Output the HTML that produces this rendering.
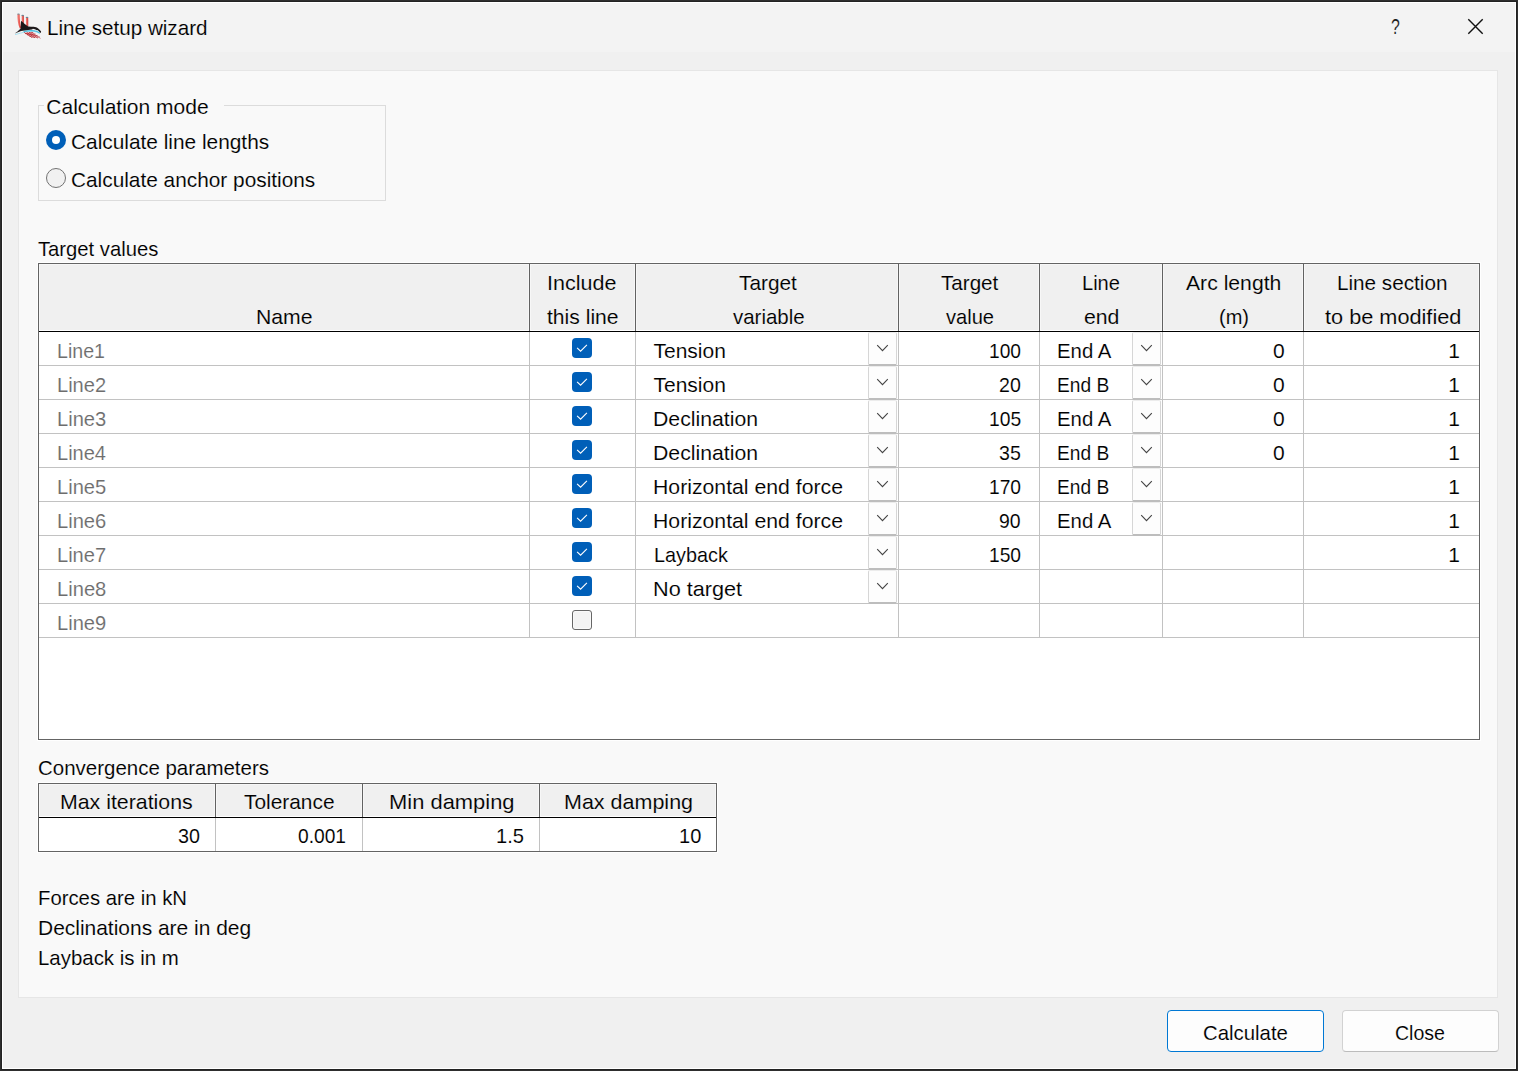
<!DOCTYPE html>
<html lang="en"><head><meta charset="utf-8"><title>Line setup wizard</title>
<style>
html,body{margin:0;padding:0}
body{width:1518px;height:1071px;overflow:hidden;background:#f0f0f0;position:relative;font-family:"Liberation Sans",sans-serif;font-size:21px;color:#000}
.abs{position:absolute}
.t{position:absolute;line-height:24px;height:24px;white-space:nowrap;transform-origin:0 0}
.frame{position:absolute;left:0;top:0;width:1516px;height:1069px;border:1px solid #2e2e2e;box-shadow:inset 0 0 0 1px #222,inset 0 0 0 2px #fff;pointer-events:none}
.titlebar{position:absolute;left:2px;top:2px;width:1514px;height:50px;background:#f3f3f3}
.panel{position:absolute;left:18px;top:70px;width:1478px;height:926px;background:#f9f9f9;border:1px solid #e6e6e6}
.group{position:absolute;left:38px;top:105px;width:346px;height:94px;border:1px solid #dcdcdc}
.legendgap{position:absolute;left:44px;top:104px;width:180px;height:3px;background:#f9f9f9}
.radio{position:absolute;width:20px;height:20px;border-radius:50%;box-sizing:border-box}
.radio.on{background:#005fb8}
.radio.on::after{content:"";position:absolute;left:5.9px;top:5.9px;width:8.2px;height:8.2px;border-radius:50%;background:#fff}
.radio.off{background:#f1f1f1;border:1px solid #727272}
.grid{position:absolute;left:38px;top:263px;width:1440px;height:475px;border:1px solid #646464;background:#fff;box-shadow:0 0 0 1px #fff}
.ghead{position:absolute;left:39px;top:264px;width:1440px;height:67px;background:#f0f0f0}
.hl{position:absolute;height:1px;background:#c2c2c2}
.vl{position:absolute;width:1px;background:#c2c2c2}
.vh{position:absolute;width:1px;background:#626262}
.hc{position:absolute;background:#f0f0f0;box-sizing:border-box;border:1px solid #f7f7f7;border-bottom-color:#fff}
.hk{position:absolute;height:1px;background:#000}
.cb{position:absolute;width:20px;height:20px;border-radius:4px;box-sizing:border-box}
.cb.on{background:#005fb8}
.cb.off{background:#f3f3f3;border:1px solid #666;box-shadow:inset 0 0 0 1px #f9f9f9;border-radius:3px}
.cb svg{position:absolute;left:0;top:0}
.dd{position:absolute;width:29px;height:34px;box-sizing:border-box;background:#fdfdfd;border:1px solid #d6d6d6;border-top-color:#ececec;border-bottom:2px solid #bdbdbd;border-radius:2px}
.dd svg{position:absolute;left:0;top:0}
.grid2{position:absolute;left:38px;top:783px;width:677px;height:67px;border:1px solid #646464;background:#fff;box-shadow:0 0 0 1px #fff}
.g2head{position:absolute;left:39px;top:784px;width:677px;height:33px;background:#f0f0f0}
.btn{position:absolute;box-sizing:border-box;height:42px;border-radius:4px;background:#fdfdfd}
.gray{color:#6d6d6d}
.bt{-webkit-text-stroke:0.12px #f3f3f3}.bp{-webkit-text-stroke:0.12px #f9f9f9}.bh{-webkit-text-stroke:0.12px #f0f0f0}.bb{-webkit-text-stroke:0.12px #fdfdfd}.bw{-webkit-text-stroke:0.12px #fff}
</style></head><body>
<div class="titlebar"></div>
<svg class="abs" style="left:13px;top:11px" width="32" height="30" viewBox="0 0 32 30">
<defs><linearGradient id="rg" x1="0" x2="1" y1="0" y2="0"><stop offset="0" stop-color="#f29088"/><stop offset="0.45" stop-color="#ee5e56"/><stop offset="1" stop-color="#c03a3a"/></linearGradient></defs>
<path d="M4.3 3.2 L6.7 3.2 C6.7 8 7 13 8.5 17.6 L6.8 17.6 C4.8 13 4.3 8 4.3 3.2 Z" fill="url(#rg)"/>
<path d="M8.6 4.6 L10.9 4.6 L10.9 13.5 L8.7 13.5 Z" fill="url(#rg)"/>
<path d="M12.9 6.5 L15.2 6.5 L15.3 15.6 L13.1 15.6 Z" fill="url(#rg)"/>
<g fill="#6f8390"><ellipse cx="5.45" cy="3.1" rx="1.35" ry="0.7"/><ellipse cx="9.7" cy="4.5" rx="1.3" ry="0.7"/><ellipse cx="14" cy="6.4" rx="1.3" ry="0.7"/></g>
<path d="M2 23.6 C6 23 9.5 21.2 13 20.6 C18 19.8 23.5 20.2 26.8 22.6" fill="none" stroke="#a8e2f2" stroke-width="1"/>
<path d="M10.5 20.6 C15 19.6 21 19.4 24 20.4 C25.4 20.9 26.2 21.6 26.9 22.2" fill="none" stroke="#4cc0e0" stroke-width="1.1"/>
<g stroke="#b8242c" stroke-width="0.9" fill="none">
<path d="M11.2 21.4 L19 26.4" opacity="0.95"/><path d="M13.6 21.3 L22 26.8" opacity="0.9"/><path d="M16 21.2 L25 27.2" opacity="0.8"/><path d="M18.4 21.2 L27.5 27.4" opacity="0.6"/>
<path d="M12.2 22.6 L20.2 21.6" opacity="0.95"/><path d="M14.2 23.9 L22.4 23" opacity="0.9"/><path d="M16.3 25.2 L24.6 24.4" opacity="0.8"/><path d="M18.4 26.4 L26.8 25.8" opacity="0.6"/>
</g>
<path d="M1.7 22.6 C3.4 21.4 5.6 19.6 7.6 17.8 C7.8 15.2 8 12.6 8 10.4 L8.5 10 C10.6 12 12.8 14 15.2 15.5 C17.2 15.6 19 15.7 20.5 15.8 C22.4 16 24 16.6 25.2 17.4 C26.4 18.2 27.4 19.3 28.1 20.6 C28.1 21.2 27.9 21.7 27.6 21.9 C26.9 21.3 26 20.3 24.7 18.9 C24.4 19.2 24.1 19.3 23.9 19.2 C22.6 18.6 21.2 18 19.9 17.8 C19.6 18.2 19.2 18.4 18.8 18.5 C15 18.9 11.5 19.4 8.1 20 C6 20.8 3.8 21.8 1.7 22.6 Z" fill="#1c1819"/>
</svg>
<div class="t bt" id="qm" style="left:1391px;top:15px;font-size:22px;transform:scaleX(0.72);color:#1a1a1a">?</div>
<svg class="abs" style="left:1466px;top:17px" width="20" height="20" viewBox="0 0 20 20"><path d="M2.3 2.3 L16.7 16.7 M16.7 2.3 L2.3 16.7" stroke="#111" stroke-width="1.4" fill="none"/></svg>
<div class="panel"></div>
<div class="group"></div><div class="legendgap"></div>
<div class="radio on" style="left:46px;top:130px"></div>
<div class="radio off" style="left:46px;top:168px"></div>
<div class="grid"></div><div class="ghead"></div>
<div class="hc" style="left:39px;top:264px;width:490px;height:67px"></div>
<div class="hc" style="left:530px;top:264px;width:105px;height:67px"></div>
<div class="hc" style="left:636px;top:264px;width:262px;height:67px"></div>
<div class="hc" style="left:899px;top:264px;width:140px;height:67px"></div>
<div class="hc" style="left:1040px;top:264px;width:122px;height:67px"></div>
<div class="hc" style="left:1163px;top:264px;width:140px;height:67px"></div>
<div class="hc" style="left:1304px;top:264px;width:175px;height:67px"></div>
<div class="hk" style="left:39px;top:331px;width:1440px"></div>
<div class="hl" style="left:39px;top:365px;width:1440px"></div>
<div class="hl" style="left:39px;top:399px;width:1440px"></div>
<div class="hl" style="left:39px;top:433px;width:1440px"></div>
<div class="hl" style="left:39px;top:467px;width:1440px"></div>
<div class="hl" style="left:39px;top:501px;width:1440px"></div>
<div class="hl" style="left:39px;top:535px;width:1440px"></div>
<div class="hl" style="left:39px;top:569px;width:1440px"></div>
<div class="hl" style="left:39px;top:603px;width:1440px"></div>
<div class="hl" style="left:39px;top:637px;width:1440px"></div>
<div class="vh" style="left:529px;top:264px;height:67px"></div>
<div class="vl" style="left:529px;top:332px;height:306px"></div>
<div class="vh" style="left:635px;top:264px;height:67px"></div>
<div class="vl" style="left:635px;top:332px;height:306px"></div>
<div class="vh" style="left:898px;top:264px;height:67px"></div>
<div class="vl" style="left:898px;top:332px;height:306px"></div>
<div class="vh" style="left:1039px;top:264px;height:67px"></div>
<div class="vl" style="left:1039px;top:332px;height:306px"></div>
<div class="vh" style="left:1162px;top:264px;height:67px"></div>
<div class="vl" style="left:1162px;top:332px;height:306px"></div>
<div class="vh" style="left:1303px;top:264px;height:67px"></div>
<div class="vl" style="left:1303px;top:332px;height:306px"></div>
<div class="cb on" style="left:572px;top:338px"><svg width="20" height="20" viewBox="0 0 20 20"><path d="M5.1 9.9 L8.6 13.2 L14.9 6.9" stroke="#fff" stroke-width="1.1" fill="none"/></svg></div>
<div class="dd" style="left:868px;top:332px"><svg width="27" height="31" viewBox="0 0 27 31"><path d="M8.2 12.2 L13.5 17.6 L18.8 12.2" stroke="#444" stroke-width="1.1" fill="none"/></svg></div>
<div class="dd" style="left:1132px;top:332px"><svg width="27" height="31" viewBox="0 0 27 31"><path d="M8.2 12.2 L13.5 17.6 L18.8 12.2" stroke="#444" stroke-width="1.1" fill="none"/></svg></div>
<div class="cb on" style="left:572px;top:372px"><svg width="20" height="20" viewBox="0 0 20 20"><path d="M5.1 9.9 L8.6 13.2 L14.9 6.9" stroke="#fff" stroke-width="1.1" fill="none"/></svg></div>
<div class="dd" style="left:868px;top:366px"><svg width="27" height="31" viewBox="0 0 27 31"><path d="M8.2 12.2 L13.5 17.6 L18.8 12.2" stroke="#444" stroke-width="1.1" fill="none"/></svg></div>
<div class="dd" style="left:1132px;top:366px"><svg width="27" height="31" viewBox="0 0 27 31"><path d="M8.2 12.2 L13.5 17.6 L18.8 12.2" stroke="#444" stroke-width="1.1" fill="none"/></svg></div>
<div class="cb on" style="left:572px;top:406px"><svg width="20" height="20" viewBox="0 0 20 20"><path d="M5.1 9.9 L8.6 13.2 L14.9 6.9" stroke="#fff" stroke-width="1.1" fill="none"/></svg></div>
<div class="dd" style="left:868px;top:400px"><svg width="27" height="31" viewBox="0 0 27 31"><path d="M8.2 12.2 L13.5 17.6 L18.8 12.2" stroke="#444" stroke-width="1.1" fill="none"/></svg></div>
<div class="dd" style="left:1132px;top:400px"><svg width="27" height="31" viewBox="0 0 27 31"><path d="M8.2 12.2 L13.5 17.6 L18.8 12.2" stroke="#444" stroke-width="1.1" fill="none"/></svg></div>
<div class="cb on" style="left:572px;top:440px"><svg width="20" height="20" viewBox="0 0 20 20"><path d="M5.1 9.9 L8.6 13.2 L14.9 6.9" stroke="#fff" stroke-width="1.1" fill="none"/></svg></div>
<div class="dd" style="left:868px;top:434px"><svg width="27" height="31" viewBox="0 0 27 31"><path d="M8.2 12.2 L13.5 17.6 L18.8 12.2" stroke="#444" stroke-width="1.1" fill="none"/></svg></div>
<div class="dd" style="left:1132px;top:434px"><svg width="27" height="31" viewBox="0 0 27 31"><path d="M8.2 12.2 L13.5 17.6 L18.8 12.2" stroke="#444" stroke-width="1.1" fill="none"/></svg></div>
<div class="cb on" style="left:572px;top:474px"><svg width="20" height="20" viewBox="0 0 20 20"><path d="M5.1 9.9 L8.6 13.2 L14.9 6.9" stroke="#fff" stroke-width="1.1" fill="none"/></svg></div>
<div class="dd" style="left:868px;top:468px"><svg width="27" height="31" viewBox="0 0 27 31"><path d="M8.2 12.2 L13.5 17.6 L18.8 12.2" stroke="#444" stroke-width="1.1" fill="none"/></svg></div>
<div class="dd" style="left:1132px;top:468px"><svg width="27" height="31" viewBox="0 0 27 31"><path d="M8.2 12.2 L13.5 17.6 L18.8 12.2" stroke="#444" stroke-width="1.1" fill="none"/></svg></div>
<div class="cb on" style="left:572px;top:508px"><svg width="20" height="20" viewBox="0 0 20 20"><path d="M5.1 9.9 L8.6 13.2 L14.9 6.9" stroke="#fff" stroke-width="1.1" fill="none"/></svg></div>
<div class="dd" style="left:868px;top:502px"><svg width="27" height="31" viewBox="0 0 27 31"><path d="M8.2 12.2 L13.5 17.6 L18.8 12.2" stroke="#444" stroke-width="1.1" fill="none"/></svg></div>
<div class="dd" style="left:1132px;top:502px"><svg width="27" height="31" viewBox="0 0 27 31"><path d="M8.2 12.2 L13.5 17.6 L18.8 12.2" stroke="#444" stroke-width="1.1" fill="none"/></svg></div>
<div class="cb on" style="left:572px;top:542px"><svg width="20" height="20" viewBox="0 0 20 20"><path d="M5.1 9.9 L8.6 13.2 L14.9 6.9" stroke="#fff" stroke-width="1.1" fill="none"/></svg></div>
<div class="dd" style="left:868px;top:536px"><svg width="27" height="31" viewBox="0 0 27 31"><path d="M8.2 12.2 L13.5 17.6 L18.8 12.2" stroke="#444" stroke-width="1.1" fill="none"/></svg></div>
<div class="cb on" style="left:572px;top:576px"><svg width="20" height="20" viewBox="0 0 20 20"><path d="M5.1 9.9 L8.6 13.2 L14.9 6.9" stroke="#fff" stroke-width="1.1" fill="none"/></svg></div>
<div class="dd" style="left:868px;top:570px"><svg width="27" height="31" viewBox="0 0 27 31"><path d="M8.2 12.2 L13.5 17.6 L18.8 12.2" stroke="#444" stroke-width="1.1" fill="none"/></svg></div>
<div class="cb off" style="left:572px;top:610px"></div>
<div class="grid2"></div><div class="g2head"></div>
<div class="hc" style="left:39px;top:784px;width:176px;height:33px"></div>
<div class="hc" style="left:216px;top:784px;width:146px;height:33px"></div>
<div class="hc" style="left:363px;top:784px;width:176px;height:33px"></div>
<div class="hc" style="left:540px;top:784px;width:176px;height:33px"></div>
<div class="hk" style="left:39px;top:817px;width:677px"></div>
<div class="vh" style="left:215px;top:784px;height:33px"></div>
<div class="vl" style="left:215px;top:818px;height:33px"></div>
<div class="vh" style="left:362px;top:784px;height:33px"></div>
<div class="vl" style="left:362px;top:818px;height:33px"></div>
<div class="vh" style="left:539px;top:784px;height:33px"></div>
<div class="vl" style="left:539px;top:818px;height:33px"></div>
<div class="btn" style="left:1167px;top:1010px;width:157px;border:1px solid #0078d4"></div>
<div class="btn" style="left:1342px;top:1010px;width:157px;border:1px solid #d2d2d2;border-bottom-color:#bcbcbc"></div>
<div id="title" class="t bt" style="left:47.28px;top:16px;transform:scaleX(0.9820)">Line setup wizard</div>
<div id="leg" class="t bp" style="left:46.33px;top:95px;">Calculation mode</div>
<div id="r1" class="t bp" style="left:70.87px;top:130px;transform:scaleX(0.9928)">Calculate line lengths</div>
<div id="r2" class="t bp" style="left:70.54px;top:168px;transform:scaleX(0.9916)">Calculate anchor positions</div>
<div id="tv" class="t bp" style="left:38.28px;top:237px;transform:scaleX(0.9628)">Target values</div>
<div id="hName" class="t bh" style="left:255.99px;top:305px;transform:scaleX(1.0102)">Name</div>
<div id="hInc1" class="t bh" style="left:546.97px;top:271px;transform:scaleX(1.0247)">Include</div>
<div id="hInc2" class="t bh" style="left:547.01px;top:305px;transform:scaleX(1.0051)">this line</div>
<div id="hTv1" class="t bh" style="left:738.99px;top:271px;transform:scaleX(0.9913)">Target</div>
<div id="hTv2" class="t bh" style="left:732.52px;top:305px;transform:scaleX(0.9749)">variable</div>
<div id="hVal1" class="t bh" style="left:941.42px;top:271px;transform:scaleX(0.9819)">Target</div>
<div id="hVal2" class="t bh" style="left:946.24px;top:305px;transform:scaleX(0.9567)">value</div>
<div id="hLe1" class="t bh" style="left:1082.37px;top:271px;transform:scaleX(0.9558)">Line</div>
<div id="hLe2" class="t bh" style="left:1083.80px;top:305px;transform:scaleX(1.0104)">end</div>
<div id="hArc1" class="t bh" style="left:1185.82px;top:271px;transform:scaleX(1.0081)">Arc length</div>
<div id="hArc2" class="t bh" style="left:1218.62px;top:305px;transform:scaleX(0.9528)">(m)</div>
<div id="hSec1" class="t bh" style="left:1336.96px;top:271px;transform:scaleX(0.9851)">Line section</div>
<div id="hSec2" class="t bh" style="left:1324.75px;top:305px;transform:scaleX(1.0336)">to be modified</div>
<div id="conv" class="t bp" style="left:38.40px;top:756px;transform:scaleX(0.9748)">Convergence parameters</div>
<div id="c1" class="t bh" style="left:60.40px;top:790px;transform:scaleX(1.0152)">Max iterations</div>
<div id="c2" class="t bh" style="left:243.72px;top:790px;transform:scaleX(0.9940)">Tolerance</div>
<div id="c3" class="t bh" style="left:388.60px;top:790px;transform:scaleX(1.0443)">Min damping</div>
<div id="c4" class="t bh" style="left:563.98px;top:790px;transform:scaleX(1.0238)">Max damping</div>
<div id="v1" class="t bw" style="left:177.71px;top:824px;transform:scaleX(0.9384)">30</div>
<div id="v2" class="t bw" style="left:298.07px;top:824px;transform:scaleX(0.9143)">0.001</div>
<div id="v3" class="t bw" style="left:496.38px;top:824px;transform:scaleX(0.9570)">1.5</div>
<div id="v4" class="t bw" style="left:679.42px;top:824px;transform:scaleX(0.9537)">10</div>
<div id="n1" class="t bp" style="left:38.24px;top:886px;transform:scaleX(0.9671)">Forces are in kN</div>
<div id="n2" class="t bp" style="left:38.20px;top:916px;transform:scaleX(0.9977)">Declinations are in deg</div>
<div id="n3" class="t bp" style="left:38.14px;top:946px;transform:scaleX(0.9723)">Layback is in m</div>
<div id="b1" class="t bb" style="left:1203.06px;top:1021px;transform:scaleX(0.9699)">Calculate</div>
<div id="b2" class="t bb" style="left:1395.42px;top:1021px;transform:scaleX(0.9313)">Close</div>
<div id="nm0" class="t bw gray" style="left:57.48px;top:339px;transform:scaleX(0.9340)">Line1</div>
<div id="tv0" class="t bw" style="left:653.53px;top:339px;">Tension</div>
<div id="val0" class="t bw" style="left:988.63px;top:339px;transform:scaleX(0.9133)">100</div>
<div id="le0" class="t bw" style="left:1057.29px;top:339px;transform:scaleX(0.9691)">End A</div>
<div id="arc0" class="t bw" style="left:1272.98px;top:339px;">0</div>
<div id="sec0" class="t bw" style="left:1448.13px;top:339px;">1</div>
<div id="nm1" class="t bw gray" style="left:57.17px;top:373px;transform:scaleX(0.9559)">Line2</div>
<div id="tv1" class="t bw" style="left:653.53px;top:373px;">Tension</div>
<div id="val1" class="t bw" style="left:999.44px;top:373px;transform:scaleX(0.9326)">20</div>
<div id="le1" class="t bw" style="left:1057.20px;top:373px;transform:scaleX(0.9129)">End B</div>
<div id="arc1" class="t bw" style="left:1272.98px;top:373px;">0</div>
<div id="sec1" class="t bw" style="left:1448.13px;top:373px;">1</div>
<div id="nm2" class="t bw gray" style="left:57.05px;top:407px;transform:scaleX(0.9587)">Line3</div>
<div id="tv2" class="t bw" style="left:653.03px;top:407px;transform:scaleX(1.0105)">Declination</div>
<div id="val2" class="t bw" style="left:989.12px;top:407px;transform:scaleX(0.9166)">105</div>
<div id="le2" class="t bw" style="left:1057.29px;top:407px;transform:scaleX(0.9691)">End A</div>
<div id="arc2" class="t bw" style="left:1272.98px;top:407px;">0</div>
<div id="sec2" class="t bw" style="left:1448.13px;top:407px;">1</div>
<div id="nm3" class="t bw gray" style="left:57.12px;top:441px;transform:scaleX(0.9533)">Line4</div>
<div id="tv3" class="t bw" style="left:653.03px;top:441px;transform:scaleX(1.0105)">Declination</div>
<div id="val3" class="t bw" style="left:999.04px;top:441px;transform:scaleX(0.9325)">35</div>
<div id="le3" class="t bw" style="left:1057.20px;top:441px;transform:scaleX(0.9129)">End B</div>
<div id="arc3" class="t bw" style="left:1272.98px;top:441px;">0</div>
<div id="sec3" class="t bw" style="left:1448.13px;top:441px;">1</div>
<div id="nm4" class="t bw gray" style="left:56.85px;top:475px;transform:scaleX(0.9567)">Line5</div>
<div id="tv4" class="t bw" style="left:653.10px;top:475px;transform:scaleX(1.0107)">Horizontal end force</div>
<div id="val4" class="t bw" style="left:988.87px;top:475px;transform:scaleX(0.9149)">170</div>
<div id="le4" class="t bw" style="left:1057.20px;top:475px;transform:scaleX(0.9129)">End B</div>
<div id="sec4" class="t bw" style="left:1448.13px;top:475px;">1</div>
<div id="nm5" class="t bw gray" style="left:57.04px;top:509px;transform:scaleX(0.9587)">Line6</div>
<div id="tv5" class="t bw" style="left:653.10px;top:509px;transform:scaleX(1.0107)">Horizontal end force</div>
<div id="val5" class="t bw" style="left:999.18px;top:509px;transform:scaleX(0.9248)">90</div>
<div id="le5" class="t bw" style="left:1057.29px;top:509px;transform:scaleX(0.9691)">End A</div>
<div id="sec5" class="t bw" style="left:1448.13px;top:509px;">1</div>
<div id="nm6" class="t bw gray" style="left:57.17px;top:543px;transform:scaleX(0.9559)">Line7</div>
<div id="tv6" class="t bw" style="left:653.84px;top:543px;transform:scaleX(0.9436)">Layback</div>
<div id="val6" class="t bw" style="left:989.05px;top:543px;transform:scaleX(0.9150)">150</div>
<div id="sec6" class="t bw" style="left:1448.13px;top:543px;">1</div>
<div id="nm7" class="t bw gray" style="left:57.05px;top:577px;transform:scaleX(0.9593)">Line8</div>
<div id="tv7" class="t bw" style="left:653.34px;top:577px;transform:scaleX(1.0310)">No target</div>
<div id="nm8" class="t bw gray" style="left:57.22px;top:611px;transform:scaleX(0.9572)">Line9</div>
<div class="frame"></div>
</body></html>
